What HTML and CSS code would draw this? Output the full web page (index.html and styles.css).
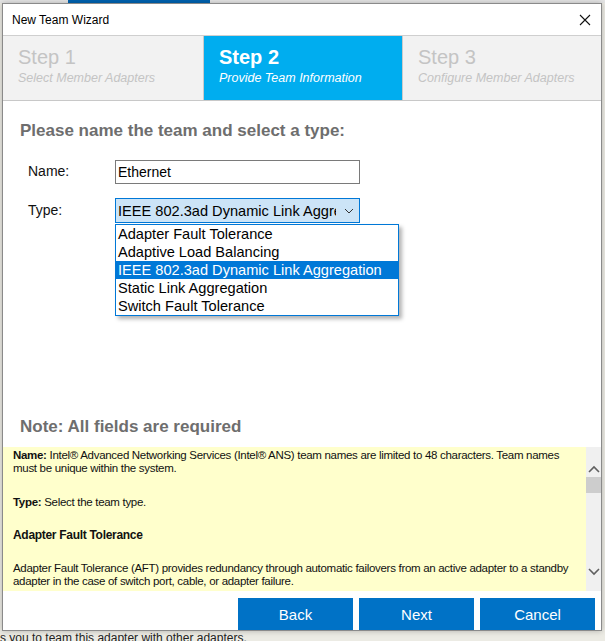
FILE: index.html
```html
<!DOCTYPE html>
<html lang="en">
<head>
    <meta charset="UTF-8">
    <title>New Team Wizard</title>
    <link rel="stylesheet" href="styles.css">
</head>
<body>
    <div class="backdrop-top">
        <div class="app-tab"></div>
    </div>

    <div class="dialog">
        <div class="titlebar">
            <span class="title">New Team Wizard</span>
            <svg class="close" width="12" height="12" viewBox="0 0 12 12">
                <path d="M1 1 L11 11 M11 1 L1 11" stroke="#111" stroke-width="1.1" fill="none"/>
            </svg>
        </div>

        <div class="steps">
            <div class="step">
                <div class="step-num">Step 1</div>
                <div class="step-desc">Select Member Adapters</div>
            </div>
            <div class="step active">
                <div class="step-num">Step 2</div>
                <div class="step-desc">Provide Team Information</div>
            </div>
            <div class="step">
                <div class="step-num">Step 3</div>
                <div class="step-desc">Configure Member Adapters</div>
            </div>
        </div>

        <div class="content">
            <h2 class="section-title">Please name the team and select a type:</h2>

            <div class="form-row">
                <label class="field-label">Name:</label>
                <div class="textbox">Ethernet</div>
            </div>

            <div class="form-row type-row">
                <label class="field-label">Type:</label>
                <div class="combo-wrap">
                    <div class="combo">
                        <span class="combo-text">IEEE 802.3ad Dynamic Link Aggregation</span>
                        <svg class="combo-arrow" width="10" height="6" viewBox="0 0 10 6">
                            <path d="M1 1 L5 5 L9 1" stroke="#333" stroke-width="1" fill="none"/>
                        </svg>
                    </div>
                    <ul class="dropdown">
                        <li>Adapter Fault Tolerance</li>
                        <li>Adaptive Load Balancing</li>
                        <li class="hilite">IEEE 802.3ad Dynamic Link Aggregation</li>
                        <li>Static Link Aggregation</li>
                        <li>Switch Fault Tolerance</li>
                    </ul>
                </div>
            </div>

            <h2 class="section-title note">Note: All fields are required</h2>
        </div>

        <div class="help">
            <div class="help-text">
                <p><b>Name:</b> Intel® Advanced Networking Services (Intel® ANS) team names are limited to 48 characters. Team names must be unique within the system.</p>
                <p class="before-head"><b>Type:</b> Select the team type.</p>
                <h4>Adapter Fault Tolerance</h4>
                <p>Adapter Fault Tolerance (AFT) provides redundancy through automatic failovers from an active adapter to a standby adapter in the case of switch port, cable, or adapter failure.</p>
            </div>
            <div class="scrollbar">
                <svg class="scroll-arrow" width="12" height="8" viewBox="0 0 12 8">
                    <path d="M1 7 L6 2 L11 7" stroke="#606060" stroke-width="1.6" fill="none"/>
                </svg>
                <div class="scroll-thumb"></div>
                <div class="scroll-track"></div>
                <svg class="scroll-arrow" width="12" height="8" viewBox="0 0 12 8">
                    <path d="M1 1 L6 6 L11 1" stroke="#606060" stroke-width="1.6" fill="none"/>
                </svg>
            </div>
        </div>

        <div class="buttons">
            <button class="btn">Back</button>
            <button class="btn">Next</button>
            <button class="btn">Cancel</button>
        </div>
    </div>

    <div class="backdrop-bottom">s you to team this adapter with other adapters.</div>
</body>
</html>
```

FILE: styles.css
```css
/* --- fundo e janela --- */
html, body {
    margin: 0;
    padding: 0;
}

body {
    width: 605px;
    height: 641px;
    overflow: hidden;
    background-color: #ecebe4;
    font-family: "Liberation Sans", Arial, sans-serif;
    color: #000;
}

.backdrop-top {
    height: 3px;
    overflow: hidden;
    padding-left: 68px;
    background-color: #e6e6e6;
}

.app-tab {
    width: 142px;
    height: 3px;
    background-color: #0063b1;
}

.dialog {
    margin-left: 2px;
    width: 598px;
    height: 626px;
    border: 1px solid #8a8a8a;
    background-color: #fff;
    box-shadow: 0 0 6px rgba(0, 0, 0, 0.25);
    display: flex;
    flex-direction: column;
}

.backdrop-bottom {
    font-size: 12px;
    line-height: 12px;
    padding-top: 1px;
    color: #222;
    white-space: nowrap;
}

/* --- barra de titulo --- */
.titlebar {
    height: 31px;
    display: flex;
    align-items: center;
    justify-content: space-between;
    padding: 0 10px 0 9px;
    border-bottom: 1px solid #cfcfcf;
}

.title {
    font-size: 12px;
    color: #000;
}

.close {
    margin-top: 1px;
}

/* --- passos --- */
.steps {
    display: flex;
    height: 64px;
    border-bottom: 1px solid #c8c8c8;
    background-color: #f2f2f2;
}

.step {
    width: 199px;
    padding: 9px 0 0 15px;
    box-sizing: border-box;
    color: #c4c4c4;
    border-right: 1px solid #cacaca;
}

.step:first-child {
    width: 201px;
}

.step:last-child {
    border-right: none;
    flex: 1;
}

.step.active {
    background-color: #00adef;
    color: #fff;
}

.step-num {
    font-size: 20px;
    font-weight: bold;
    line-height: 24px;
}

.step:not(.active) .step-num {
    font-weight: normal;
}

.step-desc {
    font-size: 12.5px;
    font-style: italic;
    line-height: 16px;
    margin-top: 1px;
}

/* --- formulario --- */
.content {
    height: 346px;
    padding: 20px 0 0 0;
    box-sizing: border-box;
    display: flex;
    flex-direction: column;
}

.section-title {
    margin: 0 0 0 17px;
    font-size: 17px;
    line-height: 20px;
    font-weight: bold;
    color: #6e6e6e;
}

.section-title.note {
    margin-top: auto;
    margin-bottom: 10px;
}

.form-row {
    display: flex;
    align-items: flex-start;
    padding-left: 25px;
    margin-top: 19px;
}

.type-row {
    margin-top: 14px;
}

.field-label {
    width: 87px;
    font-size: 14px;
    color: #111;
    line-height: 22px;
}

.type-row .field-label {
    line-height: 25px;
}

.textbox {
    width: 241px;
    height: 22px;
    border: 1px solid #7a7a7a;
    font-size: 14px;
    line-height: 23px;
    padding-left: 2px;
}

.combo-wrap {
    position: relative;
}

.combo {
    width: 241px;
    height: 23px;
    border: 1px solid #0078d7;
    background-color: #cce4f7;
    display: flex;
    align-items: center;
    padding-left: 2px;
}

.combo-text {
    font-size: 14.6px;
    width: 218px;
    overflow: hidden;
    white-space: nowrap;
}

.combo-arrow {
    margin-left: 8px;
}

.dropdown {
    position: absolute;
    left: 0;
    top: 26px;
    width: 282px;
    margin: 0;
    padding: 0;
    list-style: none;
    background-color: #fff;
    border: 1px solid #0078d7;
    box-shadow: 3px 3px 4px rgba(0, 0, 0, 0.3);
}

.dropdown li {
    height: 18px;
    line-height: 18px;
    font-size: 14.6px;
    padding-left: 2px;
    white-space: nowrap;
}

.dropdown li.hilite {
    background-color: #0078d7;
    color: #fff;
}

/* --- painel de ajuda --- */
.help {
    height: 144px;
    display: flex;
    background-color: #ffffcc;
}

.help-text {
    flex: 1;
    padding: 2px 6px 0 10px;
    font-size: 11.5px;
    letter-spacing: -0.3px;
    line-height: 13px;
    color: #111;
    overflow: hidden;
}

.help-text p {
    margin: 0 0 21px 0;
}

.help-text p.before-head {
    margin-bottom: 19px;
}

.help-text h4 {
    margin: 0 0 20px 0;
    font-size: 12px;
    line-height: 14px;
}

.scrollbar {
    width: 15px;
    background-color: #f0f0f0;
    display: flex;
    flex-direction: column;
    align-items: center;
}

.scroll-arrow {
    margin: 18px 0 4px 0;
}

.scroll-arrow:last-child {
    margin: 0 0 15px 0;
}

.scroll-thumb {
    width: 15px;
    height: 16px;
    background-color: #cdcdcd;
}

.scroll-track {
    flex: 1;
}

/* --- botoes --- */
.buttons {
    flex: 1;
    display: flex;
    justify-content: flex-end;
    gap: 6px;
    padding: 7px 6px 0 0;
}

.btn {
    width: 115px;
    height: 32px;
    border: none;
    background-color: #0072c6;
    color: #fff;
    font-family: "Liberation Sans", Arial, sans-serif;
    font-size: 15px;
}
```
